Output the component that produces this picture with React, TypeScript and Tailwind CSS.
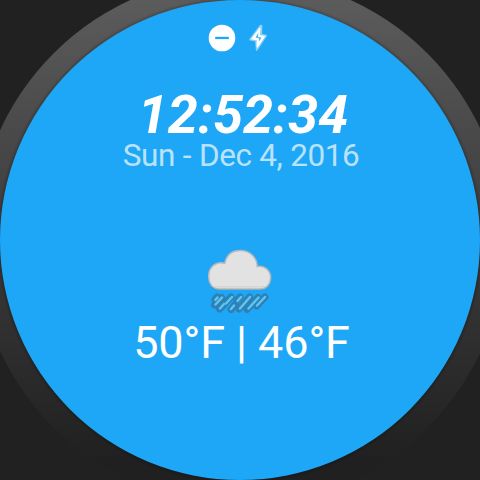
import React from "react";

function StatusIcons() {
  return (
    <div className="mt-[24px] flex h-[28px] items-center gap-[12px] pr-[4px]">
      <svg width="28" height="28" viewBox="0 0 28 28">
        <circle cx="14" cy="14" r="13.3" fill="#fff" />
        <rect x="7.2" y="12.8" width="13.6" height="2.3" fill="#1ea7f6" />
      </svg>
      <svg width="20" height="30" viewBox="0 0 20 30" className="overflow-visible">
        <path
          d="M12.4 2.5 L1.8 16.8 L7.8 17.8 L8.6 27.2 L18.4 12.6 L13.4 11.6 L13.6 2.5 Z"
          fill="#fff"
          fillOpacity="0.3"
          stroke="#fff"
          strokeOpacity="0.4"
          strokeWidth="1.6"
          strokeLinejoin="round"
        />
        <path
          d="M12 5 L3.8 15.9 L9.2 16.7 L9.4 24 L16.4 13.5 L11.4 12.6 Z"
          fill="#fff"
          stroke="#fff"
          strokeWidth="1.2"
          strokeLinejoin="round"
        />
        <path d="M10.4 9.6 L7.6 14.4 L11 15.2 L10.8 18.8 L13.6 14.6 L10 13.9 Z" fill="#2aa9f5" fillOpacity="0.85" />
      </svg>
    </div>
  );
}

const drops = [
  [217, 297, 215, 299.5],
  [221.5, 297.5, 214.5, 305],
  [226, 301, 219.5, 309],
  [231, 297, 222, 306.5],
  [240, 297, 237, 300],
  [235, 304.5, 231, 309.5],
  [249.5, 297, 239, 309],
  [258, 297.5, 247, 309.5],
  [265, 297, 256.5, 306],
];

const rain = [
  [217.5, 297.5, 215.5, 299.8],
  [222, 297.5, 215.5, 304.5],
  [224, 304, 220, 308.5],
  [232, 297, 226, 303.5],
  [241, 297, 237.5, 301],
  [234, 305.5, 231, 309],
  [250, 297, 240, 308.5],
  [258.5, 297.5, 248.5, 308.5],
  [265, 297, 257, 305.5],
];

function RainCloud() {
  const cloud =
    "M219.5 289 C212.8 289 208.7 284.3 208.7 275.8 C208.7 268.5 214 262.7 221 262.7 Q223 262.7 224.8 263.2 C226.5 255.5 232 250.6 240.2 250.6 C250.3 250.6 257 257.5 257.3 266.5 C264.5 265.3 270.6 270.3 270.6 277.5 C270.6 284 266.5 289 260 289 Z";
  return (
    <svg className="mt-[75px]" width="70" height="68" viewBox="205 247 70 68">
      <path d={cloud} transform="translate(0 1)" fill="#4f849f" />
      <path d={cloud} fill="#e2e2e2" stroke="#b3b9bd" strokeWidth="1.5" />
      <path d="M215 286.8 H264" stroke="#c9c9c9" strokeWidth="0.8" />
      <g strokeLinecap="round">
        {drops.map((d, i) => (
          <line key={i} x1={d[0]} y1={d[1]} x2={d[2]} y2={d[3]} stroke="#2c82b8" strokeWidth="7" />
        ))}
        {rain.map((d, i) => (
          <line key={i} x1={d[0]} y1={d[1]} x2={d[2]} y2={d[3]} stroke="#62c4ea" strokeWidth="2.5" />
        ))}
      </g>
    </svg>
  );
}

export default function App() {
  return (
    <div className="flex h-[480px] w-[480px] items-center justify-center overflow-hidden bg-[#212121] font-[Roboto,sans-serif] text-white">
      <div className="flex h-[529px] w-[529px] shrink-0 items-center justify-center rounded-full bg-linear-to-b from-[#5b5b5b] from-5% to-[#202020] to-92%">
        <div className="flex h-[480px] w-[480px] shrink-0 flex-col items-center rounded-full bg-[#1ea7f6] shadow-[0_0_2px_2px_rgba(0,0,0,0.18)]">
          <StatusIcons />
          <div className="mt-[39px] whitespace-nowrap pl-[6px] text-[54px] leading-[48px] font-bold italic">12:52:34</div>
          <div className="mt-px whitespace-nowrap pl-[2px] text-[31.5px] leading-[32px] tracking-[-0.45px] [word-spacing:0.5px] text-white/70">Sun - Dec 4, 2016</div>
          <RainCloud />
          <div className="mt-[5px] whitespace-nowrap pl-[3px] text-[45px] leading-[45px] tracking-[-0.1px]">50°F | 46°F</div>
        </div>
      </div>
    </div>
  );
}
